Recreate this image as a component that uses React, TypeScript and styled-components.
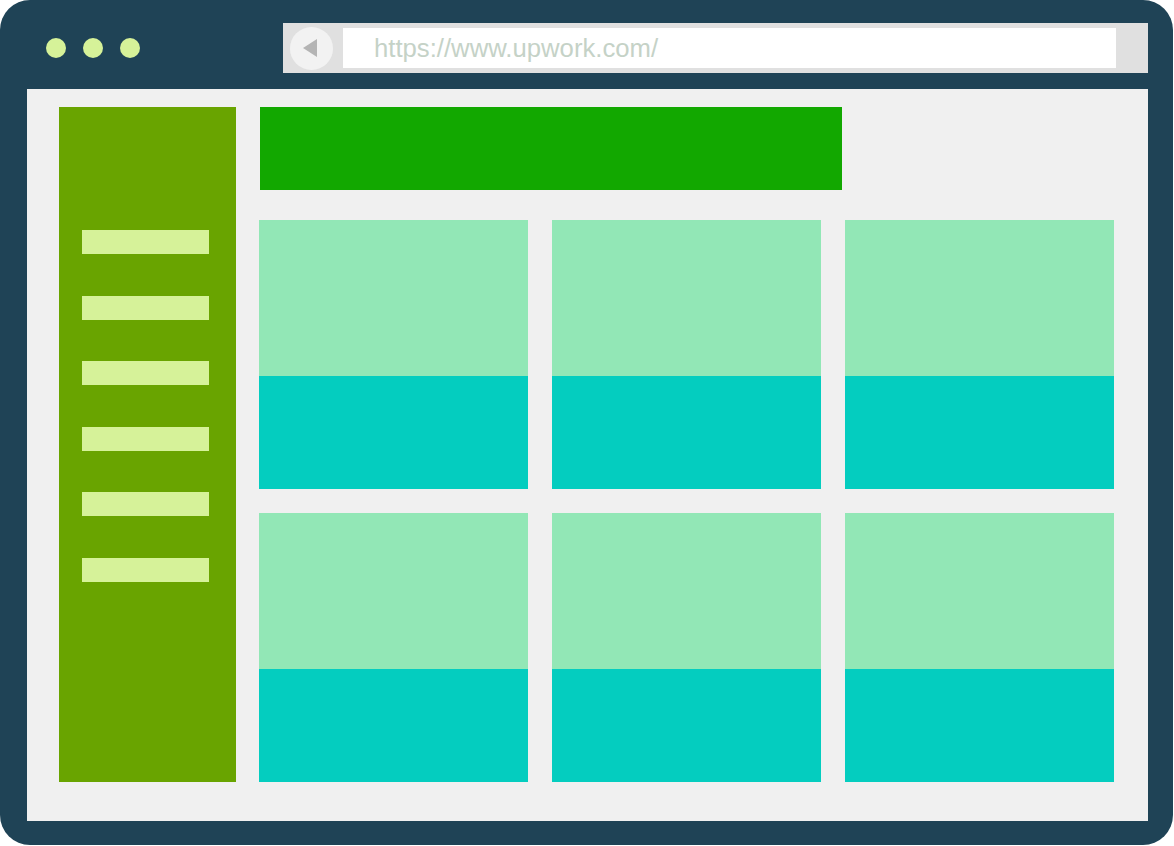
import { FC } from 'react';
import styled, { createGlobalStyle } from 'styled-components';

const GlobalStyle = createGlobalStyle`
  html, body {
    margin: 0;
    padding: 0;
    background: #ffffff;
  }
  * {
    box-sizing: border-box;
  }
`;

const Frame = styled.div`
  width: 1173px;
  height: 845px;
  background: #1f4356;
  border-radius: 30px;
  display: flex;
  flex-direction: column;
  padding: 0 25px 24px 27px;
`;

const TopBar = styled.div`
  height: 89px;
  display: flex;
  align-items: center;
  padding: 7px 0 0 19px;
`;

const Dots = styled.div`
  display: flex;
  gap: 17px;
  width: 237px;
`;

const Dot = styled.span`
  width: 20px;
  height: 20px;
  border-radius: 50%;
  background: #d6f299;
`;

const UrlBar = styled.div`
  flex: 1;
  height: 50px;
  background: #e0e0e0;
  display: flex;
  align-items: center;
  padding: 0 32px 0 7px;
  gap: 10px;
`;

const BackButton = styled.div`
  width: 43px;
  height: 43px;
  border-radius: 50%;
  background: #f2f2f2;
  display: flex;
  align-items: center;
  justify-content: center;
  padding-right: 3px;
`;

const UrlField = styled.div`
  flex: 1;
  height: 40px;
  background: #ffffff;
  display: flex;
  align-items: center;
  padding-left: 31px;
  font-family: "Liberation Sans", Arial, sans-serif;
  font-size: 25.7px;
  color: #c5d2c7;
  letter-spacing: 0;
`;

const Screen = styled.div`
  flex: 1;
  background: #f0f0f0;
  display: flex;
  gap: 23px;
  padding: 18px 34px 39px 32px;
`;

const Sidebar = styled.aside`
  width: 177px;
  background: #69a400;
  display: flex;
  flex-direction: column;
  gap: 41.6px;
  padding: 123px 0 0 23px;
`;

const MenuBar = styled.div`
  width: 127px;
  height: 24px;
  background: #d6f299;
`;

const Main = styled.main`
  flex: 1;
  display: flex;
  flex-direction: column;
  gap: 30px;
`;

const Banner = styled.div`
  width: 582px;
  height: 83px;
  margin-left: 1px;
  background: #12a800;
`;

const Grid = styled.div`
  flex: 1;
  display: grid;
  grid-template-columns: repeat(3, 1fr);
  grid-template-rows: repeat(2, 1fr);
  gap: 24px;
`;

const Card = styled.div`
  display: grid;
  grid-template-rows: 156px 1fr;
`;

const CardTop = styled.div`
  background: #92e7b6;
`;

const CardBottom = styled.div`
  background: #04cdbf;
`;

const BackArrow: FC = () => (
  <svg width="14" height="18" viewBox="0 0 14 18">
    <polygon points="14,0 14,18 0,9" fill="#b4b4b4" />
  </svg>
);

const menu = [0, 1, 2, 3, 4, 5];
const cards = [0, 1, 2, 3, 4, 5];

const App: FC = () => (
  <>
    <GlobalStyle />
    <Frame>
      <TopBar>
        <Dots>
          <Dot />
          <Dot />
          <Dot />
        </Dots>
        <UrlBar>
          <BackButton>
            <BackArrow />
          </BackButton>
          <UrlField>https://www.upwork.com/</UrlField>
        </UrlBar>
      </TopBar>
      <Screen>
        <Sidebar>
          {menu.map((i) => (
            <MenuBar key={i} />
          ))}
        </Sidebar>
        <Main>
          <Banner />
          <Grid>
            {cards.map((i) => (
              <Card key={i}>
                <CardTop />
                <CardBottom />
              </Card>
            ))}
          </Grid>
        </Main>
      </Screen>
    </Frame>
  </>
);

export default App;
